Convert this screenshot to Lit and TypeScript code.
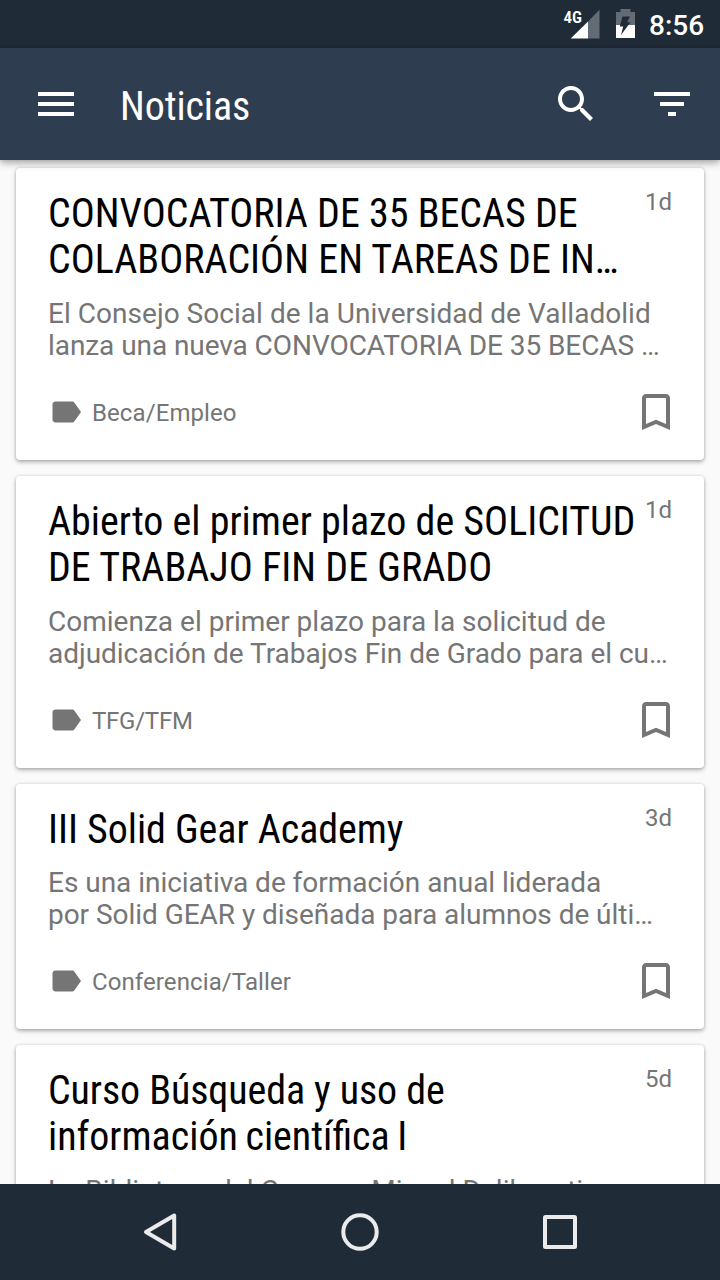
import { LitElement, html, css, svg } from "lit";
import { customElement, property } from "lit/decorators.js";
import { styleMap } from "lit/directives/style-map.js";

const icons = {
  menu: svg`<path d="M3 18h18v-2H3v2zm0-5h18v-2H3v2zm0-7v2h18V6H3z"/>`,
  search: svg`<path d="M15.5 14h-.79l-.28-.27C15.41 12.59 16 11.11 16 9.5 16 5.91 13.09 3 9.5 3S3 5.91 3 9.5 5.91 16 9.5 16c1.61 0 3.09-.59 4.23-1.57l.27.28v.79l5 4.99L20.49 19l-4.99-5zm-6 0C7.01 14 5 11.99 5 9.5S7.01 5 9.5 5 14 7.01 14 9.5 11.99 14 9.5 14z"/>`,
  filter: svg`<path d="M10 18h4v-2h-4v2zM3 6v2h18V6H3zm3 7h12v-2H6v2z"/>`,
  label: svg`<path d="M17.63 5.84C17.27 5.33 16.67 5 16 5L5 5.01C3.9 5.01 3 5.9 3 7v10c0 1.1.9 1.99 2 1.99L16 19c.67 0 1.27-.33 1.63-.84L22 12l-4.37-6.16z"/>`,
  bookmark: svg`<path d="M17 3H7c-1.1 0-1.99.9-1.99 2L5 21l7-3 7 3V5c0-1.1-.9-2-2-2zm0 15l-5-2.18L7 18V5h10v13z"/>`,
};

/** A line of text, its tracking and its extra word spacing in pixels. */
type Line = [text: string, tracking: number, words?: number];

interface News {
  title: Line[];
  summary: Line[];
  category: Line;
  age: string;
}

const news: News[] = [
  {
    title: [["CONVOCATORIA DE 35 BECAS DE", 0], ["COLABORACIÓN EN TAREAS DE IN…", 0.03]],
    summary: [["El Consejo Social de la Universidad de Valladolid", 0.035], ["lanza una nueva CONVOCATORIA DE 35 BECAS …", -0.07]],
    category: ["Beca/Empleo", 0.09],
    age: "1d",
  },
  {
    title: [["Abierto el primer plazo de SOLICITUD", 0], ["DE TRABAJO FIN DE GRADO", 0.03]],
    summary: [["Comienza el primer plazo para la solicitud de", 0.01], ["adjudicación de Trabajos Fin de Grado para el cu…", -0.03]],
    category: ["TFG/TFM", -0.25],
    age: "1d",
  },
  {
    title: [["III Solid Gear Academy", -0.04]],
    summary: [["Es una iniciativa de formación anual liderada", -0.03], ["por Solid GEAR y diseñada para alumnos de últi…", -0.04]],
    category: ["Conferencia/Taller", 0.1],
    age: "3d",
  },
  {
    title: [["Curso Búsqueda y uso de", -0.09], ["información científica I", 0, -1.6]],
    summary: [["La Biblioteca del Campus Miguel Delibes, ti", 0.03]],
    category: ["Curso", 0],
    age: "5d",
  },
];

const line = ([text, tracking, words = 0]: Line) =>
  html`<span style=${styleMap({
    letterSpacing: tracking ? `${tracking}px` : "normal",
    wordSpacing: `${words}px`,
  })}>${text}</span>`;

@customElement("news-card")
export class NewsCard extends LitElement {
  @property({ attribute: false }) item!: News;

  static styles = css`
    :host {
      display: flex;
      flex-direction: column;
      flex: none;
      box-sizing: border-box;
      padding: 23px 24px 24px 32px;
      background: #fff;
      border-radius: 4px;
      box-shadow: 0 2px 4px rgba(0, 0, 0, 0.3), 0 0 3px rgba(0, 0, 0, 0.12);
      color: #757575;
    }
    .head { display: flex; justify-content: space-between; align-items: flex-start; padding-right: 8px; }
    .title {
      margin: 0;
      font: 400 40px/46px "Roboto Condensed", Roboto, sans-serif;
      font-stretch: 75%;
      color: #000;
      white-space: nowrap;
    }
    .title span, .summary span { display: block; }
    .title span + span { padding-bottom: 1px; }
    .age { font-size: 24px; line-height: 28px; margin-left: -20px; margin-top: -3px; }
    .summary { margin: 14px 0 0; font-size: 28px; line-height: 32px; white-space: nowrap; }
    .foot { display: flex; align-items: center; margin-top: 26px; height: 48px; }
    .tag { width: 36px; height: 36px; fill: currentColor; }
    .category { flex: 1; margin-left: 8px; font-size: 24px; line-height: 28px; padding-top: 2px; }
    .mark { width: 48px; height: 48px; fill: currentColor; }
  `;

  render() {
    const { title, summary, category, age } = this.item;
    return html`
      <div class="head">
        <h2 class="title">${title.map(line)}</h2>
        <span class="age">${age}</span>
      </div>
      <p class="summary">${summary.map(line)}</p>
      <div class="foot">
        <svg class="tag" viewBox="0 0 24 24">${icons.label}</svg>
        <div class="category">${line(category)}</div>
        <svg class="mark" viewBox="0 0 24 24">${icons.bookmark}</svg>
      </div>
    `;
  }
}

@customElement("app-root")
export class AppRoot extends LitElement {
  static styles = css`
    :host {
      display: flex;
      flex-direction: column;
      width: 720px;
      height: 1280px;
      overflow: hidden;
      background: #fafafa;
      font-family: Roboto, sans-serif;
    }
    .status {
      flex: none;
      display: flex;
      justify-content: flex-end;
      height: 48px;
      background: #202b38;
      color: #fff;
    }
    .indicators { width: 84px; height: 48px; overflow: visible; }
    .net { font: 600 17px "Roboto Condensed", Roboto, sans-serif; font-stretch: 75%; fill: #fff; }
    .clock { width: 71px; padding-top: 9px; font-size: 28px; line-height: 33px; font-weight: 500; }
    .bar {
      flex: none;
      display: flex;
      align-items: center;
      height: 112px;
      box-sizing: border-box;
      padding: 0 24px 0 32px;
      background: #2e3e50;
      color: #fff;
      box-shadow: 0 2px 8px rgba(0, 0, 0, 0.42);
      z-index: 1;
    }
    .icon { width: 48px; height: 48px; fill: currentColor; }
    .heading {
      flex: 1;
      margin: 0;
      padding: 6px 0 0 40px;
      font: 400 40px/48px "Roboto Condensed", Roboto, sans-serif;
      font-stretch: 75%;
      letter-spacing: -0.1px;
    }
    .filter { margin-left: 48px; }
    .list {
      flex: 1;
      min-height: 0;
      overflow: hidden;
      display: flex;
      flex-direction: column;
      gap: 16px;
      padding: 8px 16px 0;
    }
    .nav { flex: none; height: 96px; background: #202b38; }
    .keys { display: block; width: 720px; height: 96px; fill: none; stroke: #ebebec; stroke-width: 4; stroke-linejoin: round; }
  `;

  render() {
    return html`
      <div class="status">
        <svg class="indicators" viewBox="565 0 84 48">
          <text class="net" x="563.5" y="23">4G</text>
          <path d="M599.5 9.7V38.500H588V21.5z" fill="#636b74"/>
          <path d="M588 21.5V38.500H570.700z" fill="#fff"/>
          <path d="M620.500 9h10v3h4.500v13h-19V12h4.500z" fill="#636b74"/>
          <path d="M616 25h19v13h-19z" fill="#fff"/>
          <path d="M622.500 16.500h7.500l-2.800 5.700h3.300L621 35l2.200-8.500h-3.400z" fill="#202b38"/>
        </svg>
        <span class="clock">8:56</span>
      </div>
      <header class="bar">
        <svg class="icon" viewBox="0 0 24 24">${icons.menu}</svg>
        <h1 class="heading">Noticias</h1>
        <svg class="icon" viewBox="0 0 24 24">${icons.search}</svg>
        <svg class="icon filter" viewBox="0 0 24 24">${icons.filter}</svg>
      </header>
      <main class="list">
        ${news.map((n) => html`<news-card .item=${n}></news-card>`)}
      </main>
      <nav class="nav">
        <svg class="keys" viewBox="0 0 720 96">
          <path d="M146 48L174.200 31.500V64.500z"/>
          <circle cx="360" cy="48" r="16.700"/>
          <rect x="545" y="33" width="30" height="30" rx="0.500"/>
        </svg>
      </nav>
    `;
  }
}
